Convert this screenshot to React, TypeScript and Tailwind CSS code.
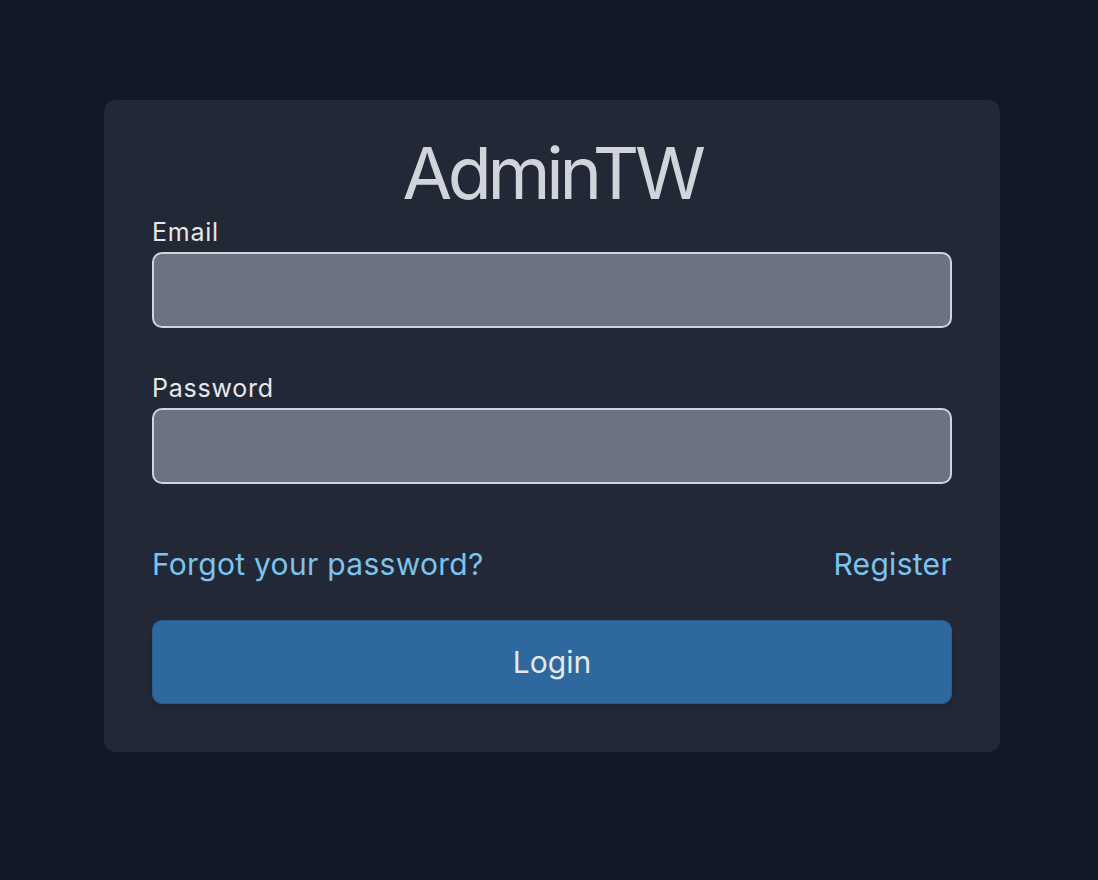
export default function App() {
  return (
    <div
      className="min-h-screen bg-[#111827] pt-[100px]"
      style={{ fontFamily: "Inter, 'Noto Sans', sans-serif" }}
    >
      <div className="ml-[104px] w-[896px] rounded-xl bg-[#222836] px-12 pt-[37px] pb-12">
        <h1 className="mb-[7px] text-center text-7xl leading-none font-normal tracking-[-0.06em] text-[#d1d5db]">
          AdminTW
        </h1>
        <form onSubmit={(e) => e.preventDefault()}>
          <label htmlFor="email" className="mb-1 block text-[25px] leading-8 font-normal tracking-[0.03em] text-[#e5e7eb]">
            Email
          </label>
          <input
            id="email"
            type="email"
            className="block h-[76px] w-full rounded-[10px] border-2 border-[#d1d5db] bg-[#6b7280] px-4 text-2xl text-white outline-none"
          />
          <label htmlFor="password" className="mt-[44px] mb-1 block text-[25px] leading-8 font-normal tracking-[0.03em] text-[#e5e7eb]">
            Password
          </label>
          <input
            id="password"
            type="password"
            className="block h-[76px] w-full rounded-[10px] border-2 border-[#d1d5db] bg-[#6b7280] px-4 text-2xl text-white outline-none"
          />
          <div className="mt-[62px] flex items-center justify-between text-3xl tracking-[0.01em] text-[#7cc4ef]">
            <a href="#">Forgot your password?</a>
            <a href="#">Register</a>
          </div>
          <button
            type="submit"
            className="mt-[38px] block w-full rounded-[10px] border border-[#285d8e] bg-[#2e689e] py-[23px] text-3xl text-[#e5e7eb] shadow-md"
          >
            Login
          </button>
        </form>
      </div>
    </div>
  );
}
